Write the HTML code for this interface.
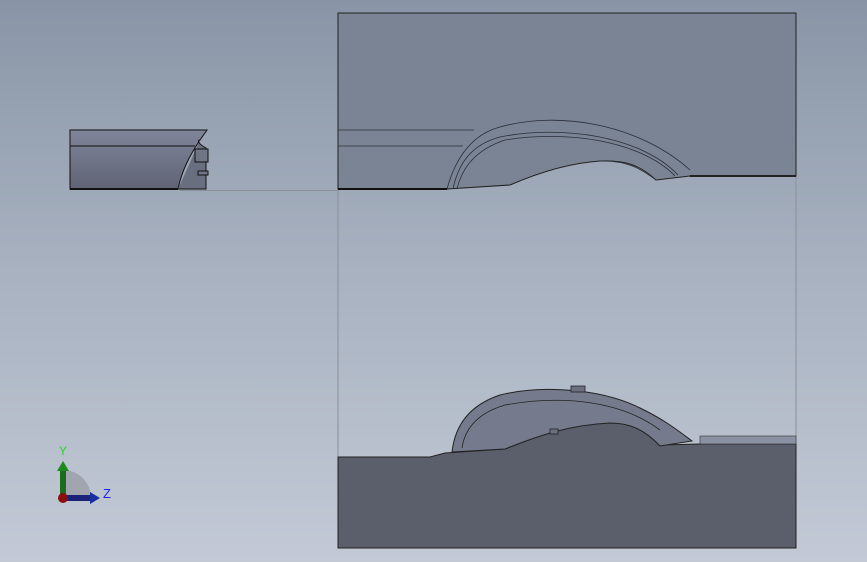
<!DOCTYPE html>
<html><head><style>
html,body{margin:0;padding:0;width:867px;height:562px;overflow:hidden}
body{background:linear-gradient(#8995a6 0%,#a6b0bf 45%,#c3cad6 100%)}
</style></head><body>
<svg width="867" height="562" viewBox="0 0 867 562" style="position:absolute;left:0;top:0" font-family="Liberation Sans, sans-serif">
<defs>
<linearGradient id="lp" x1="0" y1="0" x2="0" y2="1"><stop offset="0" stop-color="#80859a"/><stop offset="1" stop-color="#5f6374"/></linearGradient>
</defs>
<!-- thin guide lines -->
<line x1="338" y1="190" x2="338" y2="457" stroke="#8a8f98" stroke-width="1"/>
<line x1="796" y1="176" x2="796" y2="444" stroke="#8a8f98" stroke-width="1"/>
<line x1="180" y1="190.5" x2="338" y2="190.5" stroke="#8a8f98" stroke-width="1"/>
<!-- top box -->
<path d="M338,13 H796 V176 H690 L656,180 C640,165 625,160 600,161 C570,163 540,172 510,185 L447,189 H338 Z" fill="#7a8494" stroke="#222" stroke-width="1"/>
<line x1="338" y1="189" x2="447" y2="189" stroke="#111" stroke-width="2"/>
<line x1="690" y1="176" x2="796" y2="176" stroke="#222" stroke-width="2"/>
<g fill="none" stroke="#2a2e38" stroke-width="0.8">
<line x1="338" y1="130" x2="474" y2="130"/>
<line x1="338" y1="146" x2="463" y2="146"/>
<path d="M447,189 C455,160 470,135 500,127 C560,110 640,125 690,170"/>
<path d="M453,189 C458,165 470,145 500,137 C560,125 640,135 678,175"/>
<path d="M457,189 C462,168 475,150 505,140 C565,130 640,140 675,176"/>
<path d="M600,161 C630,160 645,172 656,180"/>
</g>
<!-- bottom -->
<path d="M338,457 H430 L445,453 L505,449 C540,435 580,420 620,422 C640,423 650,435 660,445 L700,444 H796 V548 H338 Z" fill="#5b5f6b" stroke="#222" stroke-width="1"/>
<path d="M452,452 C455,425 470,405 500,395 C540,385 600,388 640,408 C665,420 680,432 692,441 L660,446 C645,430 630,423 610,423 C570,425 540,435 505,449 Z" fill="#757a8c" stroke="#222" stroke-width="1"/>
<path d="M462,448 C465,428 478,413 505,405 C560,395 620,400 660,430" fill="none" stroke="#222" stroke-width="0.8"/>
<rect x="700" y="436" width="96" height="8" fill="#8a91a2" stroke="#333" stroke-width="0.6"/>
<rect x="571" y="386" width="14" height="6" fill="#6a7080" stroke="#222" stroke-width="0.8"/>
<rect x="550" y="429" width="8" height="5" fill="#6a7080" stroke="#222" stroke-width="0.8"/>
<!-- left piece -->
<path d="M70,130 H207 L200,140 C190,155 182,170 178,189 H70 Z" fill="url(#lp)" stroke="#111" stroke-width="1"/>
<path d="M178,189 H206 V148 C200,145 196,140 200,140" fill="#6a6f80" stroke="#111" stroke-width="1"/>
<line x1="70" y1="146" x2="195" y2="146" stroke="#111" stroke-width="1"/>
<line x1="70" y1="189" x2="178" y2="189" stroke="#111" stroke-width="2"/>
<rect x="195" y="149" width="13" height="13" fill="#707585" stroke="#111"/>
<rect x="198" y="171" width="10" height="4" fill="#707585" stroke="#111"/>
<!-- triad -->
<path d="M63,498 V470 A28,28 0 0 1 91,498 Z" fill="#9a9ea6" opacity="0.8"/>
<rect x="60" y="470" width="6" height="28" fill="#1d6b1d"/>
<polygon points="57,471 63,461 69,471" fill="#1d8a1d"/>
<rect x="63" y="495" width="28" height="6" fill="#1a237a"/>
<polygon points="90,492 100,498 90,504" fill="#1a2fa0"/>
<circle cx="63" cy="498" r="5" fill="#8a1010"/>
<text x="59" y="455" font-size="12" fill="#2bd42b">Y</text>
<text x="103" y="498" font-size="13" fill="#2020ff">Z</text>
</svg>
</body></html>
